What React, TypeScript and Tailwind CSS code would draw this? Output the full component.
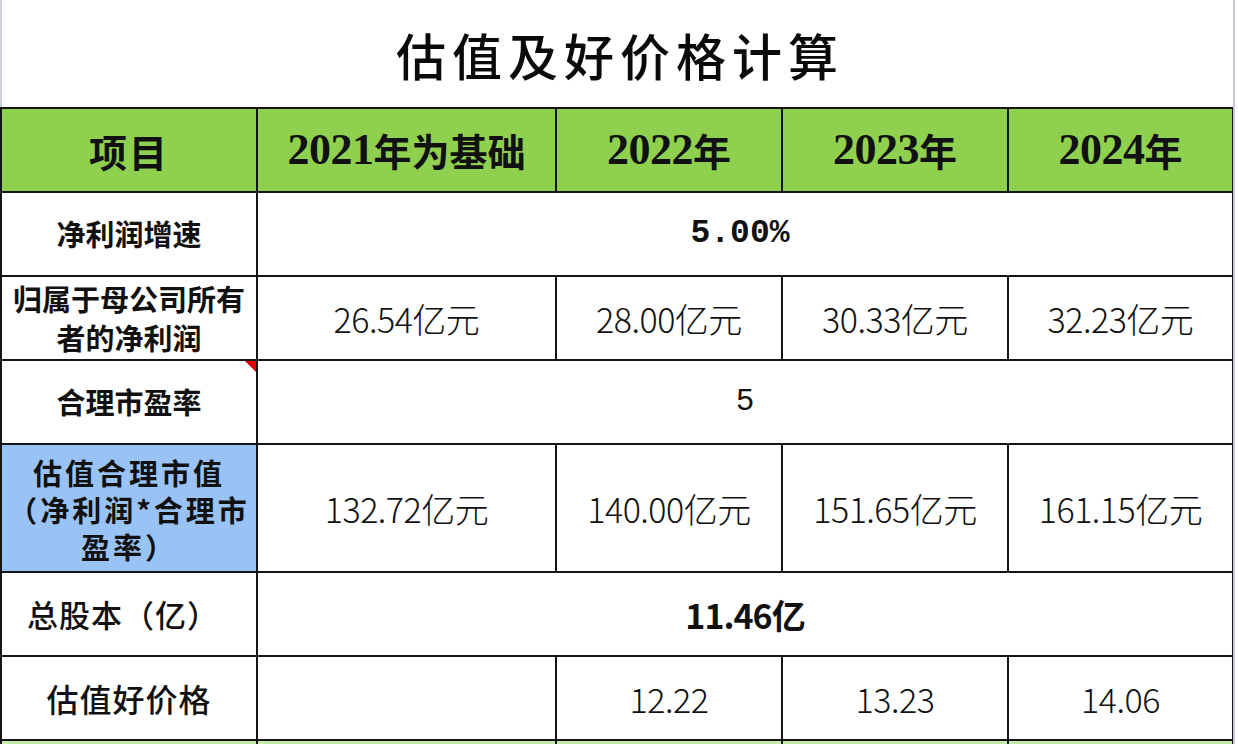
import React from "react";

const cjk = '"Noto Sans CJK SC", "Noto Sans", sans-serif';
const serifDigits = '"Liberation Serif", "Noto Sans CJK SC", serif';

function Cell({
  children,
  className = "",
  bg = "bg-white",
  style,
}: {
  children?: React.ReactNode;
  className?: string;
  bg?: string;
  style?: React.CSSProperties;
}) {
  return (
    <div
      className={"flex items-center justify-center text-center text-[#111] " + bg + " " + className}
      style={style}
    >
      {children}
    </div>
  );
}

function HeadYear({ y, rest }: { y: string; rest: string }) {
  return (
    <Cell bg="bg-[#8fd14f]" className="font-bold">
      <span className="text-[44px] leading-none tracking-[-0.5px]" style={{ fontFamily: serifDigits }}>
        {y}
      </span>
      <span className="text-[38px] leading-none" style={{ fontFamily: cjk }}>
        {rest}
      </span>
    </Cell>
  );
}

function Val({ children }: { children: React.ReactNode }) {
  return (
    <Cell className="text-[34px] font-light tracking-[-0.5px]" style={{ fontFamily: cjk }}>
      {children}
    </Cell>
  );
}

export default function App() {
  return (
    <div className="w-[1238px] h-[744px] overflow-hidden bg-white relative" style={{ fontFamily: cjk }}>
      {/* faint right sheet line */}
      <div className="absolute right-[3px] top-0 h-full w-[2px] bg-[#c9c9de]" />
      <div className="w-[1234px] h-[107px] border-l-2 border-[#cfd3de] flex items-center justify-center">
        <span className="text-[50px] font-medium tracking-[6px] text-[#0a0a0a] leading-none pl-[4px]">
          估值及好价格计算
        </span>
      </div>
      <div
        className="grid w-[1234px] bg-[#151515] p-[2px] gap-[2px]"
        style={{
          gridTemplateColumns: "254px 297px 224px 224px 223px",
          gridTemplateRows: "82px 82px 82px 82px 126px 82px 82px 40px",
        }}
      >
        {/* header */}
        <Cell bg="bg-[#8fd14f]" className="font-bold text-[38px] tracking-[2px]">项目</Cell>
        <HeadYear y="2021" rest="年为基础" />
        <HeadYear y="2022" rest="年" />
        <HeadYear y="2023" rest="年" />
        <HeadYear y="2024" rest="年" />

        {/* 净利润增速 */}
        <Cell className="font-bold text-[29px]">净利润增速</Cell>
        <Cell
          className="col-span-4 font-bold text-[33px]"
          style={{ fontFamily: '"Liberation Mono", monospace' }}
        >
          <span className="pr-[10px]">5.00%</span>
        </Cell>

        {/* 归属 */}
        <Cell className="font-bold text-[29px] leading-[39px] flex-col">
          <span className="block">归属于母公司所有</span>
          <span className="block">者的净利润</span>
        </Cell>
        <Val>26.54亿元</Val>
        <Val>28.00亿元</Val>
        <Val>30.33亿元</Val>
        <Val>32.23亿元</Val>

        {/* 合理市盈率 */}
        <Cell className="font-bold text-[29px] relative">
          合理市盈率
          <div
            className="absolute top-0 right-0 w-[11px] h-[11px] bg-[#e00000]"
            style={{ clipPath: "polygon(0 0, 100% 0, 100% 100%)" }}
          />
        </Cell>
        <Cell
          className="col-span-4 text-[31px]"
          style={{ fontFamily: '"Liberation Mono", monospace' }}
        >
          5
        </Cell>

        {/* 估值合理市值 */}
        <Cell bg="bg-[#99c3f4]" className="font-bold text-[29px] leading-[37px] tracking-[3px] flex-col pt-[2px]">
          <span className="block">估值合理市值</span>
          <span className="block">（净利润*合理市</span>
          <span className="block">盈率）</span>
        </Cell>
        <Val>132.72亿元</Val>
        <Val>140.00亿元</Val>
        <Val>151.65亿元</Val>
        <Val>161.15亿元</Val>

        {/* 总股本 */}
        <Cell className="font-medium text-[31px] tracking-[1px] pr-[12px]">总股本（亿）</Cell>
        <Cell className="col-span-4 font-bold text-[34px] tracking-[-1px]">11.46亿</Cell>

        {/* 估值好价格 */}
        <Cell className="font-medium text-[32px] tracking-[1px]">估值好价格</Cell>
        <Val>{""}</Val>
        <Val>12.22</Val>
        <Val>13.23</Val>
        <Val>14.06</Val>

        {/* next row (cut off) */}
        <div className="bg-[#c4e8a8]" />
        <div className="bg-[#c4e8a8]" />
        <div className="bg-[#c4e8a8]" />
        <div className="bg-[#c4e8a8]" />
        <div className="bg-[#c4e8a8]" />
      </div>
    </div>
  );
}
